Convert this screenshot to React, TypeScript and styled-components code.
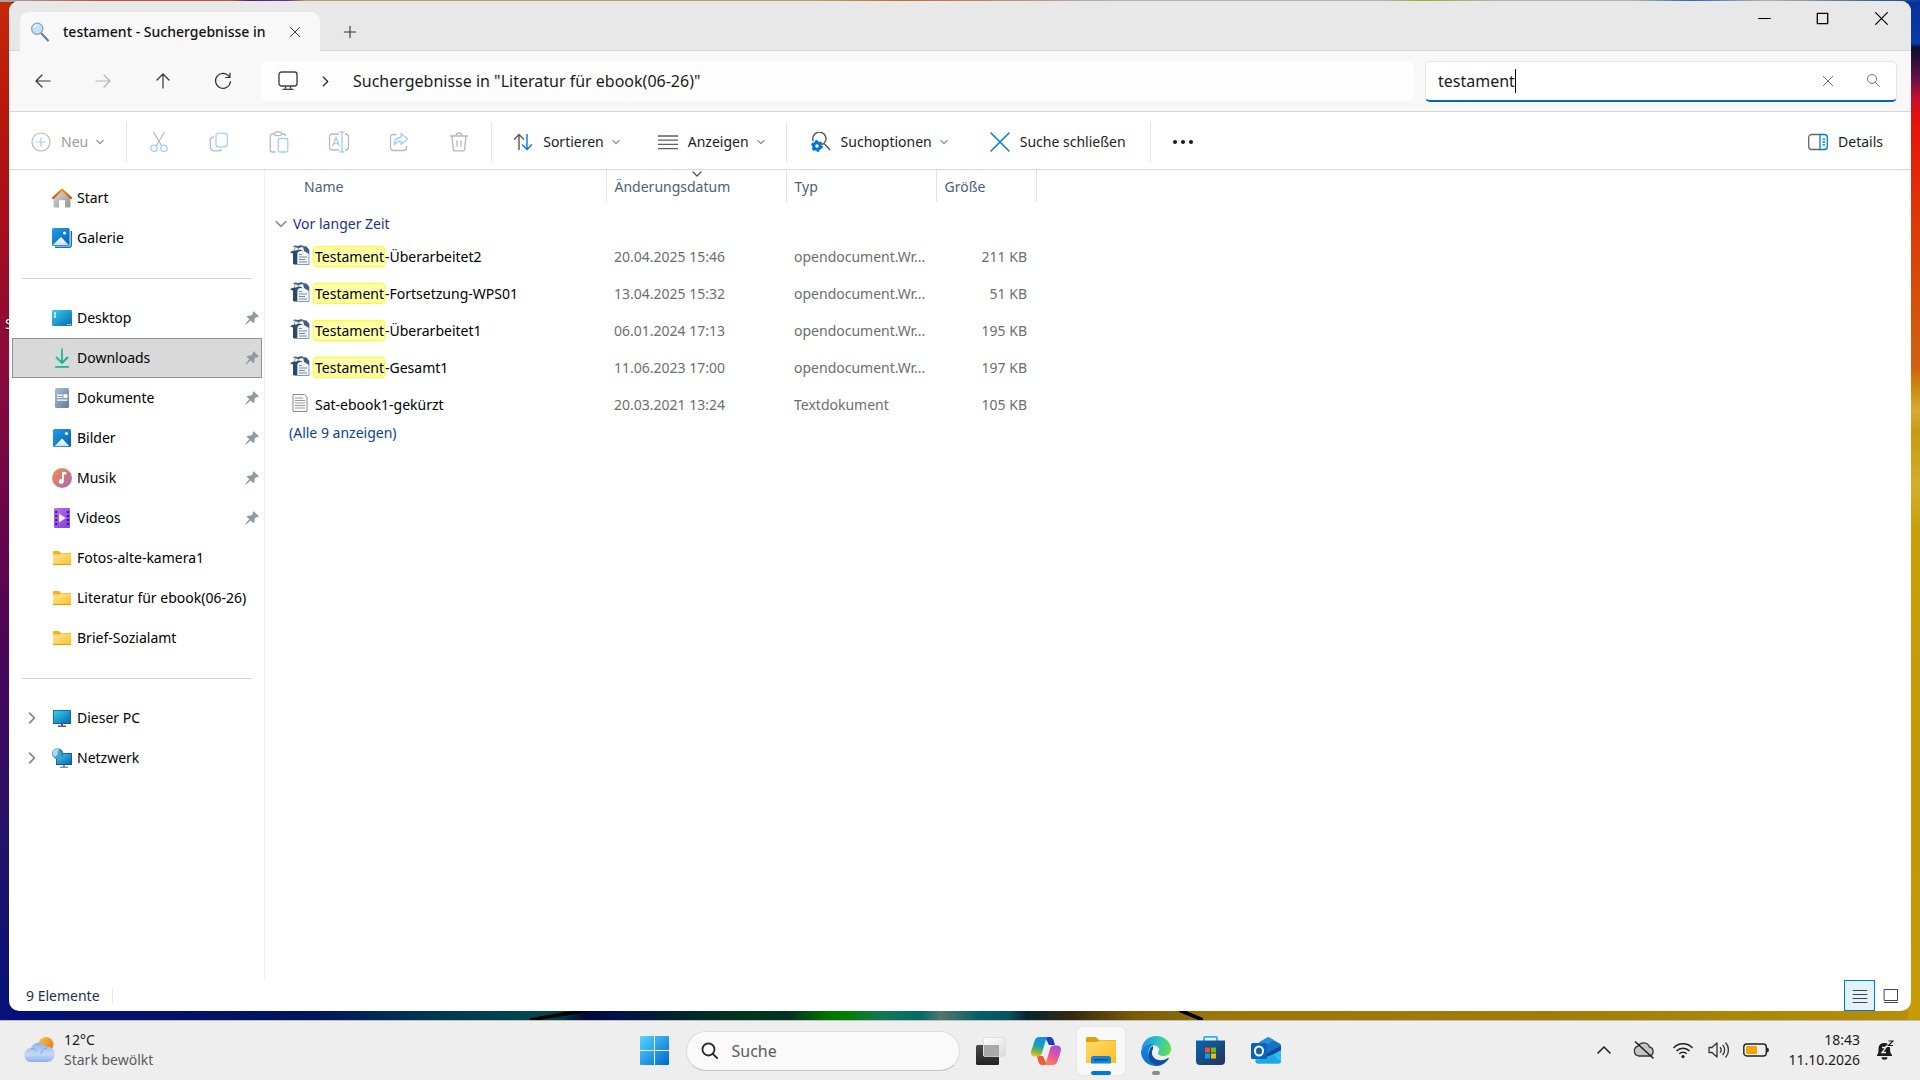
import React from "react";
import styled, { createGlobalStyle, css } from "styled-components";

const GlobalStyle = createGlobalStyle`
  *, *::before, *::after { box-sizing: border-box; }
  html, body { margin: 0; height: 100%; overflow: hidden; }
  body {
    font-family: "Noto Sans", "Open Sans", sans-serif;
    font-size: 14px;
    line-height: 20px;
    color: #1b1b1b;
  }
  button, input {
    font: inherit;
    color: inherit;
    margin: 0;
    padding: 0;
    border: 0;
    background: none;
    outline: none;
  }
  svg { display: block; flex: none; }
`;

/* ---------- desktop and window frame ---------- */

const Desktop = styled.div`
  position: relative;
  display: flex;
  flex-direction: column;
  height: 100vh;
  background:
    linear-gradient(90deg, #a8a8a8 0, #b4593c 5%, #b4593c 12%, #4b1f80 13%, #6a3290 15%, #b8a468 16%, #b8a468 42%, #c06a3a 47%, #b4b4b4 58%, #b4b4b4 72%, #9cae30 74%, #b4b4b4 78%, #b4b4b4 85%, #2a6cb0 88%, #b4b4b4 92%, #4a7090 97%, #0a3aa0 100%) 0 0 / 100% 2px no-repeat,
    linear-gradient(180deg, #c32a08 0, #b8180c 10%, #a60e1a 20%, #8f0a38 32%, #6c0548 47%, #45065a 62%, #221268 78%, #0c1276 90%, #00107a 100%) 0 0 / 12px 100% no-repeat,
    linear-gradient(180deg, #08309a 0, #0a3aa8 4%, #0a1030 4.4%, #5a1040 7%, #c01030 9%, #e81008 11%, #e03008 18%, #d84a08 26%, #cf6210 34%, #cc8a10 36%, #d8aa38 38%, #c89a10 40%, #d2ae30 45%, #c8a008 49%, #c09808 75%, #c89a08 100%) 100% 0 / 12px 100% no-repeat,
    linear-gradient(to top right, transparent 38%, #000 42%, #000 58%, transparent 62%) 62.2% calc(100% - 60px) / 24px 10px no-repeat,
    linear-gradient(to bottom right, transparent 38%, #000 42%, #000 56%, transparent 60%) 28.5% calc(100% - 60px) / 60px 10px no-repeat,
    linear-gradient(90deg, #00107a 0, #00145c 16%, #003a50 23%, #00494e 28.5%, #003848 29.2%, #00083a 30.5%, #00104a 32%, #02232f 35%, #013818 39%, #023024 41%, #007000 43%, #008000 44%, #107858 46%, #006c68 48%, #56746a 49%, #006068 51%, #065460 52.5%, #08242f 53.5%, #3a2a10 56%, #7a5a08 59%, #8a6a08 61.9%, #9a7608 62.7%, #a07c08 80%, #b88f08 100%) 0 100% / 100% 80px no-repeat,
    #101848;
`;

const ShortcutLabel = styled.span`
  position: absolute;
  left: 5px;
  top: 314px;
  color: #fff;
  text-shadow: 0 1px 2px #000;
`;

const Window = styled.main`
  position: relative;
  flex: 1;
  min-height: 0;
  display: flex;
  flex-direction: column;
  margin: 1px 9px 9px;
  overflow: hidden;
  border-radius: 10px;
  background: #fff;
`;

const TitleBar = styled.header`
  display: flex;
  align-items: flex-end;
  height: 50px;
  padding-left: 11px;
  background: #e8e8e8;
  border-bottom: 1px solid #d6d6d6;
`;

const Tab = styled.div`
  display: flex;
  align-items: center;
  height: 39px;
  width: 300px;
  margin-bottom: -1px;
  padding: 0 10px;
  background: #f8f8f8;
  border-radius: 9px 9px 0 0;
`;

const TabTitle = styled.span`
  flex: 1;
  margin: 0 10px 0 13px;
  overflow: hidden;
  white-space: nowrap;
  font-weight: 500;
  color: #111;
`;

const IconButton = styled.button<{ $w?: number; $h?: number; $dim?: boolean }>`
  display: inline-flex;
  align-items: center;
  justify-content: center;
  flex: none;
  width: ${(p) => p.$w ?? 60}px;
  height: ${(p) => p.$h ?? 40}px;
  color: ${(p) => (p.$dim ? "#b4b4b4" : "#333")};
`;

const CaptionButtons = styled.div`
  display: flex;
  align-self: flex-start;
  margin-left: auto;
`;

/* ---------- navigation bar ---------- */

const NavBar = styled.nav`
  display: flex;
  align-items: center;
  height: 61px;
  padding: 0 14px 0 4px;
  background: #f8f8f8;
  border-bottom: 1px solid #d6d6d6;
`;

const AddressBar = styled.div`
  flex: 1;
  display: flex;
  align-items: center;
  height: 40px;
  margin: 0 11px 0 8px;
  padding-left: 17px;
  border-radius: 5px;
  background: #fdfdfd;
  font-size: 16px;
`;

const Crumb = styled.a`
  color: #1b1b1b;
  text-decoration: none;
`;

const SearchField = styled.label`
  display: flex;
  align-items: center;
  width: 472px;
  height: 41px;
  padding-left: 12px;
  border: 1px solid #e4e4e4;
  border-bottom: 2px solid #0067c0;
  border-radius: 5px;
  background: #fff;
  font-size: 16px;
`;

const SearchInput = styled.input`
  field-sizing: content;
  caret-color: transparent;
`;

const Caret = styled.span`
  width: 1px;
  height: 24px;
  margin-right: auto;
  background: #000;
`;

/* ---------- command bar ---------- */

const CommandBar = styled.div`
  display: flex;
  align-items: center;
  height: 58px;
  padding: 2px 18px 0 2px;
  background: #fff;
  border-bottom: 1px solid #d6d6d6;
`;

const Command = styled.button<{ $dim?: boolean; $pad?: number }>`
  display: inline-flex;
  align-items: center;
  gap: 10px;
  height: 40px;
  padding: 0 ${(p) => p.$pad ?? 19}px;
  color: ${(p) => (p.$dim ? "#9c9c9c" : "#1b1b1b")};
  white-space: nowrap;

  & > svg:last-child { margin-left: -2px; }
`;

const Divider = styled.span<{ $h?: number }>`
  flex: none;
  width: 1px;
  height: ${(p) => p.$h ?? 40}px;
  margin: 0 2px;
  background: #e6e6e6;
`;

const Spacer = styled.span`
  flex: 1;
`;

/* ---------- body ---------- */

const Body = styled.div`
  flex: 1;
  min-height: 0;
  display: flex;
`;

const Sidebar = styled.aside`
  width: 256px;
  padding: 8px 2px 0 3px;
  border-right: 1px solid #f0f0f0;
`;

const TreeRow = styled.a<{ $selected?: boolean }>`
  display: flex;
  align-items: center;
  height: 40px;
  padding-right: 2px;
  border: 1px solid transparent;
  color: #000;
  text-decoration: none;
  white-space: nowrap;
  ${(p) =>
    p.$selected &&
    css`
      background: #d9d9d9;
      border-color: #929292;
    `}
`;

const Expander = styled.span`
  display: flex;
  justify-content: center;
  width: 37px;
`;

const TreeIcon = styled.span`
  display: flex;
  justify-content: center;
  width: 24px;
  margin-right: 3px;
`;

const TreeRule = styled.hr`
  height: 1px;
  margin: 20px 10px 19px;
  border: 0;
  background: #d4d4d4;
`;

const Content = styled.section`
  flex: 1;
  min-width: 0;
`;

const FileTable = styled.table`
  width: 771px;
  table-layout: fixed;
  border-collapse: collapse;
  color: #6d6d6d;
  white-space: nowrap;
`;

const HeadCell = styled.th<{ $w: number; $first?: boolean }>`
  position: relative;
  width: ${(p) => p.$w}px;
  height: 32px;
  padding: 2px 0 0 ${(p) => (p.$first ? 39 : 8)}px;
  border-right: 1px solid #e4e4e4;
  color: #4c607a;
  font-weight: 400;
  text-align: left;
`;

const SortMark = styled.span`
  position: absolute;
  left: 50%;
  top: -1px;
  margin-left: -4px;
`;

const GroupCell = styled.td`
  height: 36px;
  padding: 7px 0 0 10px;
`;

const GroupToggle = styled.button`
  display: flex;
  align-items: center;
  gap: 6px;
  color: #1e3287;
`;

const NameCell = styled.td`
  height: 37px;
  padding: 0 0 0 25px;
  color: #000;
`;

const NameInner = styled.div`
  display: flex;
  align-items: center;
  gap: 3px;

  & > svg { margin-bottom: 3px; }
`;

const FileName = styled.span`
  padding-left: 2px;
`;

const Hit = styled.mark`
  margin-left: -2px;
  padding: 0 0 0 1px;
  border: 1px solid #ffff1a;
  border-radius: 3px;
  background: #ffffa8;
  color: #000;
`;

const Cell = styled.td<{ $right?: boolean }>`
  padding: 0 ${(p) => (p.$right ? 9 : 20)}px 0 8px;
  overflow: hidden;
  text-overflow: ellipsis;
  text-align: ${(p) => (p.$right ? "right" : "left")};
`;

const TypeCell = styled(Cell)`
  padding-right: 4px;
`;

const ShowAll = styled.a`
  display: inline-block;
  margin-left: 24px;
  color: #0a3f94;
  text-decoration: none;
`;

const StatusBar = styled.footer`
  display: flex;
  align-items: center;
  gap: 10px;
  height: 31px;
  padding-left: 17px;
  color: #1b2f55;
`;

const ViewButton = styled.button<{ $on?: boolean }>`
  display: flex;
  align-items: center;
  justify-content: center;
  width: 31px;
  height: 31px;
  ${(p) =>
    p.$on &&
    css`
      border: 1px solid #0078d7;
      background: #e3f2fb;
    `}
`;

const ViewButtons = styled.div`
  display: flex;
  margin-left: auto;
  padding-right: 5px;
`;

/* ---------- taskbar ---------- */

const Taskbar = styled.footer`
  display: grid;
  grid-template-columns: 1fr auto 1fr;
  align-items: center;
  height: 60px;
  border-top: 1px solid #bdbdbd;
  background: #eeeeee;
`;

const Weather = styled.button`
  display: flex;
  align-items: center;
  gap: 9px;
  padding: 0 0 2px 24px;
  text-align: left;
`;

const TwoLine = styled.span<{ $end?: boolean }>`
  display: flex;
  flex-direction: column;
  align-items: ${(p) => (p.$end ? "flex-end" : "flex-start")};
`;

const Muted = styled.span`
  color: #5c5c5c;
`;

const TaskCenter = styled.div`
  display: flex;
  align-items: center;
  gap: 7px;
`;

const TaskButton = styled.button<{ $active?: boolean }>`
  position: relative;
  display: flex;
  align-items: center;
  justify-content: center;
  width: 48px;
  height: 48px;
  border-radius: 5px;
  ${(p) =>
    p.$active &&
    css`
      background: #f8f8f8;
      box-shadow: 0 0 0 1px #e6e6e6;
    `}
`;

const RunMark = styled.span<{ $active?: boolean }>`
  position: absolute;
  left: 50%;
  bottom: 0;
  width: ${(p) => (p.$active ? 20 : 8)}px;
  height: 4px;
  transform: translateX(-50%);
  border-radius: 2px;
  background: ${(p) => (p.$active ? "#0078d4" : "#8a8a8a")};
`;

const TaskSearch = styled.label`
  display: flex;
  align-items: center;
  gap: 13px;
  width: 274px;
  height: 40px;
  padding-left: 14px;
  border: 1px solid #dcdcdc;
  border-bottom-color: #c4c4c4;
  border-radius: 20px;
  background: #fafafa;
  font-size: 16px;
`;

const TaskInput = styled.input`
  flex: 1;
  min-width: 0;
  &::placeholder { color: #5c5c5c; opacity: 1; }
`;

const Tray = styled.div`
  display: flex;
  align-items: center;
  justify-content: flex-end;
  padding: 0 26px 2px 0;
`;

const TrayButton = styled.button<{ $w: number }>`
  display: flex;
  justify-content: center;
  width: ${(p) => p.$w}px;
`;

const Clock = styled.button`
  margin: 0 16px 0 12px;
`;

/* ---------- icons ---------- */

type Stroke = { d: string; s?: number; c?: string; w?: number; box?: number };
const Line = ({ d, s = 20, c = "currentColor", w = 1.2, box = 20 }: Stroke) => (
  <svg width={s} height={s} viewBox={`0 0 ${box} ${box}`} fill="none" stroke={c} strokeWidth={w} strokeLinecap="round" strokeLinejoin="round">
    <path d={d} />
  </svg>
);

const ChevronDown = ({ s = 8, c = "#808080" }: { s?: number; c?: string }) => (
  <Line d="M1 3l4 4 4-4" s={s} box={10} c={c} w={1.3} />
);

const LensIcon = () => (
  <svg width="20" height="20" viewBox="0 0 20 20">
    <path d="M11.5 11.5l6.5 7" stroke="#5b7f9a" strokeWidth="2" strokeLinecap="round" />
    <circle cx="7.2" cy="6.8" r="5.6" fill="#bfe3fb" stroke="#8fa3b1" strokeWidth="1.3" />
    <path d="M4 6a3.4 3.4 0 0 1 3-3" stroke="#fff" strokeWidth="1.2" fill="none" />
  </svg>
);

const MonitorIcon = () => (
  <svg width="20" height="20" viewBox="0 0 20 20" fill="none" stroke="#444" strokeWidth="1.4">
    <rect x="1" y="1" width="18" height="14" rx="2.4" />
    <path d="M7.5 15v3M12.5 15v3M4.5 18.4h11" />
  </svg>
);

const GREY = "#b9b9b9";
const SKY = "#9fd0f5";

const PlusCircle = () => (
  <svg width="20" height="20" viewBox="0 0 20 20" fill="none" strokeWidth="1.2">
    <circle cx="10" cy="10" r="9" stroke={GREY} />
    <path d="M10 5.5v9M5.5 10h9" stroke={SKY} />
  </svg>
);
const CutIcon = () => (
  <svg width="20" height="22" viewBox="0 0 20 22" fill="none" strokeWidth="1.3">
    <path d="M4.5 1l8.3 14M15.5 1L7.2 15" stroke={GREY} />
    <circle cx="5" cy="17.3" r="3.2" stroke={SKY} />
    <circle cx="15" cy="17.3" r="3.2" stroke={SKY} />
  </svg>
);
const CopyIcon = () => (
  <svg width="20" height="20" viewBox="0 0 20 20" fill="none" strokeWidth="1.3">
    <path d="M5 5.2H4A2.6 2.6 0 0 0 1.4 7.8v7.6A3.4 3.4 0 0 0 4.8 18.8h5.2a2.4 2.4 0 0 0 2.4-2" stroke={GREY} />
    <rect x="7" y="1.2" width="11.4" height="13.6" rx="2.4" stroke={SKY} />
  </svg>
);
const PasteIcon = () => (
  <svg width="20" height="22" viewBox="0 0 20 22" fill="none" strokeWidth="1.3">
    <path d="M6 3H3.3A2 2 0 0 0 1.3 5v14a2 2 0 0 0 2 2H6.5M12 3h2.5a2 2 0 0 1 2 2" stroke={GREY} />
    <rect x="5.5" y="1" width="7" height="3.6" rx="1.5" stroke={GREY} />
    <rect x="9.2" y="7.5" width="9.6" height="13.5" rx="1.8" stroke={SKY} />
  </svg>
);
const RenameIcon = () => (
  <svg width="22" height="22" viewBox="0 0 22 22" fill="none" strokeWidth="1.3">
    <path d="M11 3H4.5A3 3 0 0 0 1.5 6v10a3 3 0 0 0 3 3H11M17 3h.5a3 3 0 0 1 3 3v10a3 3 0 0 1-3 3H17" stroke={GREY} />
    <path d="M14 1v20M11.5 1h5M11.5 21h5M4.5 15.5L8 6.5l3.5 9M5.7 12.5h4.6" stroke={SKY} />
  </svg>
);
const ShareIcon = () => (
  <svg width="20" height="20" viewBox="0 0 20 20" fill="none" strokeWidth="1.3" strokeLinejoin="round">
    <path d="M7.5 2.5H4.2A2.7 2.7 0 0 0 1.5 5.2v10.6a2.7 2.7 0 0 0 2.7 2.7h10.6a2.7 2.7 0 0 0 2.7-2.7V14" stroke={GREY} />
    <path d="M12.2 1.5l6.3 5.5-6.3 5.5V9.3c-3.2 0-5.5 1-7.2 3.7.3-4.7 3-7.5 7.2-8z" stroke={SKY} />
  </svg>
);
const TrashIcon = () => (
  <svg width="20" height="20" viewBox="0 0 20 20" fill="none" stroke={GREY} strokeWidth="1.4">
    <path d="M1 4h18M7 4a3 3 0 0 1 6 0M3 4l1.3 13A2 2 0 0 0 6.3 18.9h7.4a2 2 0 0 0 2-1.9L17 4M8 8.5v6M12 8.5v6" />
  </svg>
);
const SortIcon = () => (
  <svg width="20" height="18" viewBox="0 0 20 18" fill="none" strokeWidth="1.4">
    <path d="M6 17V1.5M1 6.5l5-5 5 5" stroke="#555" />
    <path d="M14 1v15.5M9 11.5l5 5 5-5" stroke="#0078d4" />
  </svg>
);
const ListIcon = () => <Line d="M0 4h20M0 8.2h20M0 12.4h20M0 16.6h20" c="#5f5f5f" w={1.3} />;

const SearchOptionsIcon = () => (
  <svg width="20" height="20" viewBox="0 0 20 20" fill="none">
    <path d="M2.2 9A6.6 6.6 0 1 1 11 12.7M13.5 12l5.7 6" stroke="#555" strokeWidth="1.4" />
    <circle cx="6" cy="14" r="3.3" stroke="#0078d4" strokeWidth="3" />
    <circle cx="6" cy="14" r="4.9" stroke="#0078d4" strokeWidth="2" strokeDasharray="2.6 2.53" />
  </svg>
);
const DetailsIcon = () => (
  <svg width="20" height="18" viewBox="0 0 20 18" fill="none" strokeWidth="1.3">
    <path d="M12 1.5H3.7a3 3 0 0 0-3 3v9a3 3 0 0 0 3 3H12" stroke="#666" />
    <path d="M12 1.5h4.3a3 3 0 0 1 3 3v9a3 3 0 0 1-3 3H12zM14.5 6.2h2.7M14.5 9h2.7M14.5 11.8h2.7" stroke="#0078d4" />
  </svg>
);

const HiddenDefs = styled.svg`
  position: absolute;
`;

const Defs = () => (
  <HiddenDefs width="0" height="0" aria-hidden="true">
    <defs>
      <linearGradient id="blue" x1="0" y1="0" x2="1" y2="1"><stop offset="0" stopColor="#1f9fe8" /><stop offset="1" stopColor="#0560b5" /></linearGradient>
      <linearGradient id="cyan" x1="0" y1="0" x2="1" y2="1"><stop offset="0" stopColor="#35d3ea" /><stop offset="1" stopColor="#0a62b5" /></linearGradient>
      <linearGradient id="roof" x1="0" y1="0" x2="0" y2="1"><stop offset="0" stopColor="#f29a0c" /><stop offset="1" stopColor="#d1440c" /></linearGradient>
      <linearGradient id="wall" x1="0" y1="0" x2="1" y2="1"><stop offset="0" stopColor="#dcdcdc" /><stop offset="1" stopColor="#949494" /></linearGradient>
      <linearGradient id="down" x1="0" y1="0" x2="1" y2="1"><stop offset="0" stopColor="#2fd07c" /><stop offset="1" stopColor="#0b9fae" /></linearGradient>
      <linearGradient id="doc" x1="0" y1="0" x2="1" y2="1"><stop offset="0" stopColor="#a7bdd3" /><stop offset="1" stopColor="#637f9c" /></linearGradient>
      <linearGradient id="music" x1="0" y1="0" x2="1" y2="1"><stop offset="0" stopColor="#f5914e" /><stop offset="1" stopColor="#a864b0" /></linearGradient>
      <linearGradient id="video" x1="0" y1="0" x2="1" y2="1"><stop offset="0" stopColor="#b86cf0" /><stop offset="1" stopColor="#8040e0" /></linearGradient>
      <linearGradient id="folder" x1="0" y1="0" x2="1" y2="1"><stop offset="0" stopColor="#ffe694" /><stop offset="1" stopColor="#fbc22e" /></linearGradient>
      <linearGradient id="snow" x1="0" y1="0" x2="0" y2="1"><stop offset="0" stopColor="#fff" /><stop offset="1" stopColor="#c9e2f7" /></linearGradient>
    </defs>
  </HiddenDefs>
);

const HomeIcon = () => (
  <svg width="20" height="20" viewBox="0 0 20 20">
    <path d="M1.5 9.5L10 1.5l8.5 8V18a1.5 1.5 0 0 1-1.5 1.5h-4v-7.3H7v7.3H3A1.5 1.5 0 0 1 1.5 18z" fill="url(#wall)" />
    <path d="M1 10l9-8.5L19 10" fill="none" stroke="url(#roof)" strokeWidth="2" strokeLinecap="round" strokeLinejoin="round" />
  </svg>
);
const GalleryIcon = () => (
  <svg width="20" height="20" viewBox="0 0 20 20">
    <path d="M3 19.3h14a2.3 2.3 0 0 0 2.3-2.3V3" fill="none" stroke="#1170bd" strokeWidth="1.4" />
    <rect width="17.6" height="18" rx="1.5" fill="url(#blue)" />
    <path d="M0.5 17.3L9 9l8 8.3z" fill="url(#snow)" /><circle cx="12.5" cy="5" r="1.6" fill="#fff" />
  </svg>
);
const DesktopIcon = () => (
  <svg width="20" height="16" viewBox="0 0 20 16">
    <rect width="20" height="16" rx="1.2" fill="url(#cyan)" />
    <path d="M2 2.5h2v2H2zM2 5.5h2v2H2zM15 14h1.5v1H15zM17.5 14H19v1h-1.5z" fill="#fff" />
  </svg>
);
const DownloadIcon = () => (
  <svg width="20" height="20" viewBox="0 0 20 20" fill="none" stroke="url(#down)" strokeWidth="1.8">
    <path d="M10.01 0.5L10 14.5M4 9l6 6 6-6" />
    <path d="M3 18h14v1.8H3z" fill="#1bb894" stroke="none" />
  </svg>
);
const DocumentIcon = () => (
  <svg width="20" height="20" viewBox="0 0 20 20">
    <rect x="3" width="14" height="20" rx="1.5" fill="url(#doc)" />
    <path d="M5 6.5h5.5v1.4H5zM5 9h5.5v1H5zM11.5 6.3h4v3.7h-4zM5 11.5h10.5v1.2H5z" fill="#fff" />
  </svg>
);
const PictureIcon = () => (
  <svg width="18" height="18" viewBox="0 0 18 18">
    <rect width="18" height="18" rx="1.5" fill="url(#blue)" />
    <path d="M1.5 17.3L9 9.5l7.5 7.8z" fill="url(#snow)" /><circle cx="13.5" cy="4.5" r="1.6" fill="#fff" />
  </svg>
);
const MusicIcon = () => (
  <svg width="20" height="20" viewBox="0 0 20 20">
    <circle cx="10" cy="10" r="10" fill="url(#music)" />
    <path d="M10 4h4.2v2.6h-2.4v7a2.5 2.4 0 1 1-1.8-2.5z" fill="#fff" />
  </svg>
);
const VideoIcon = () => (
  <svg width="16" height="20" viewBox="0 0 16 20">
    <rect width="16" height="20" rx="1.2" fill="url(#video)" />
    <path d="M2.2 3v15M13.9 3v15" stroke="#3a1768" strokeWidth="2" strokeDasharray="2 2" />
    <path d="M5 5.5l6.8 4.5L5 14.5z" fill="#f2f2f2" />
  </svg>
);
const FolderIcon = () => (
  <svg width="18" height="14" viewBox="0 0 18 14">
    <path d="M0 1a1 1 0 0 1 1-1h5l2 2h9a1 1 0 0 1 1 1v10H0z" fill="#f3b11c" />
    <path d="M0 3.6h6.5l1.5-1h10V13H0z" fill="url(#folder)" />
    <path d="M0 13h18v1H0z" fill="#e39f14" />
  </svg>
);
const PcIcon = () => (
  <svg width="18" height="17" viewBox="0 0 18 17">
    <path d="M0 .8A.8.8 0 0 1 .8 0h16.4a.8.8 0 0 1 .8.8V14H0z" fill="#0a5f8f" /><path d="M.8.8h16.4v12.4H.8z" fill="url(#cyan)" />
    <path d="M8 14h2v1.5H8zM5 15.5h8V17H5z" fill="#51606b" />
  </svg>
);
const NetworkIcon = () => (
  <svg width="20" height="20" viewBox="0 0 20 20">
    <path d="M4 5h16v12H4z" fill="#0c588c" /><path d="M4.8 5.8h14.4v10.4H4.8z" fill="url(#cyan)" />
    <path d="M11 17h2v1.8h-2zM8 18.7h8V20H8z" fill="#7e8a92" />
    <circle cx="5.5" cy="5.5" r="5.5" fill="#4d9fc9" /><path d="M1 3c2-2 4-3 6-2.5C6 3 5 4 6 6c-1 2-2 1-3 3C1 8 0 5 1 3z" fill="#a9d9ee" />
    <path d="M8 2a5 5 0 0 1 2 6" stroke="#2b6f9b" strokeWidth="1.2" fill="none" />
  </svg>
);
const PinIcon = () => (
  <svg width="14" height="14" viewBox="0 0 14 14" fill="#8f9aa2">
    <path d="M8.8.3L13.7 5.2c-.8 1.3-1.7 1.3-2.7 1L9.4 8c.5 1.8.1 3-1 4.2L5.6 9.5 1 13.6l-.7-.7 4-4.7L1.5 5.5c1.2-1 2.6-1.2 4-.8L7.7 3C7.5 1.9 7.8 1 8.8.3z" />
  </svg>
);
const WriterIcon = () => (
  <svg width="20" height="20" viewBox="0 0 20 20">
    <path d="M5 2h11l3 3v14.5H4V9z" fill="#f4f7fa" stroke="#8a9db0" strokeWidth="1" />
    <path d="M3 8h4.3v11H3z" fill="#274a6b" />
    <path d="M9 9.5h3M9 12h8M9 14.5h6M9 17h8" stroke="#6c8cab" strokeWidth="1.1" />
    <path d="M0 7.5C2 5.5 4 5 6 5.8 8 3.8 11 4 13 6.5 10 5.5 8.5 6 7.3 8.5H3z" fill="#314d69" />
    <path d="M2.5 1.5C4.5 0 6.5.3 8 1.3c2-1.6 5-1.3 7 .9-2.6-.8-4.8-.3-6.5 1.5C6.7 2 4.7 1.3 2.5 1.5z" fill="#3c5a78" />
    <path d="M13 1.5h3.5L19 4.5V9L14 6z" fill="#415f7c" />
  </svg>
);
const TextFileIcon = () => (
  <svg width="20" height="20" viewBox="0 0 20 20" fill="none" stroke="#8c8c8c">
    <path d="M3 1.5h11.5l2.5 2.5v14.5H3z" fill="#fafafa" />
    <path d="M5 5h8M5 7.5h10M5 10h10M5 12.5h10M5 15h10" stroke="#9a9a9a" />
  </svg>
);

const CloudSunIcon = () => (
  <svg width="31" height="31" viewBox="0 0 31 31">
    <defs>
      <linearGradient id="sun" x1="0" y1="0" x2="1" y2="1"><stop offset="0.2" stopColor="#edb83a" /><stop offset="0.9" stopColor="#f47216" /></linearGradient>
      <linearGradient id="cloud" x1="0" y1="0" x2="0" y2="1"><stop offset="0" stopColor="#8fb2ee" /><stop offset="0.6" stopColor="#c5d9f8" /><stop offset="1" stopColor="#8db0ea" /></linearGradient>
    </defs>
    <circle cx="22" cy="10.5" r="7.5" fill="url(#sun)" />
    <path d="M7.5 28a7 7 0 0 1-.5-14 8.5 8.5 0 0 1 15-1.5 7.8 7.8 0 0 1 2 15.5z" fill="url(#cloud)" />
    <path d="M7 14.5a7 7 0 0 1 6 2.5M17 20a7 7 0 0 1 6-6" stroke="#7ea4e4" fill="none" strokeWidth="1" />
  </svg>
);
const StartIcon = () => (
  <svg width="29" height="29" viewBox="0 0 29 29">
    <defs><linearGradient id="win" gradientUnits="userSpaceOnUse" x1="0" y1="0" x2="29" y2="29"><stop offset="0" stopColor="#54d6ff" /><stop offset="1" stopColor="#0067cf" /></linearGradient></defs>
    <path d="M1 0h13v14H0V1a1 1 0 0 1 1-1zM15 0h13a1 1 0 0 1 1 1v13H15zM0 15h14v14H1a1 1 0 0 1-1-1zM15 15h14v13a1 1 0 0 1-1 1H15z" fill="url(#win)" />
  </svg>
);
const TaskViewIcon = () => (
  <svg width="30" height="28" viewBox="0 0 30 28">
    <defs>
      <linearGradient id="tv" x1="0" y1="0" x2="0" y2="1"><stop offset="0" stopColor="#4a4a4a" /><stop offset="1" stopColor="#222" /></linearGradient>
      <linearGradient id="tg" x1="0" y1="0" x2="1" y2="1"><stop offset="0" stopColor="#fff" /><stop offset="1" stopColor="#dadada" /></linearGradient>
    </defs>
    <rect y="8" width="23" height="20" rx="1.5" fill="url(#tv)" />
    <rect x="7.5" y="0.5" width="22" height="19" rx="1.5" fill="url(#tg)" stroke="#dedede" />
    <path d="M8 8h15v11.5H8z" fill="#a9a9a9" />
  </svg>
);
const CopilotIcon = () => (
  <svg width="30" height="28" viewBox="0 0 30 28">
    <defs>
      <linearGradient id="cp1" x1="0.5" y1="0" x2="0.3" y2="1"><stop offset="0" stopColor="#0c8fe8" /><stop offset="0.45" stopColor="#1e9ec0" /><stop offset="0.7" stopColor="#64b450" /><stop offset="1" stopColor="#f2c020" /></linearGradient>
      <linearGradient id="cp2" x1="0.7" y1="0" x2="0.3" y2="1"><stop offset="0" stopColor="#a150e0" /><stop offset="0.5" stopColor="#e8559c" /><stop offset="1" stopColor="#ff8050" /></linearGradient>
    </defs>
    <path d="M14 0h5c2 0 3 1.5 3.5 3l1.5 5h-6z" fill="#1a3fc4" />
    <path d="M16 28h-5c-2 0-3-1.5-3.5-3L6 19h6z" fill="#f05a34" />
    <path d="M8.5 0H18c-1.8 0-2.7 1.5-3.2 3L11 16c-.6 2-1.8 3.5-4 3.5H4c-3.5 0-4.5-3-3.7-6L3.5 4C4.3 1.5 6 0 8.5 0z" fill="url(#cp1)" />
    <path d="M21.5 28H12c1.8 0 2.7-1.5 3.2-3L19 12c.6-2 1.8-3.5 4-3.5h3c3.5 0 4.5 3 3.7 6L26.5 24c-.8 2.5-2.5 4-5 4z" fill="url(#cp2)" />
  </svg>
);
const ExplorerIcon = () => (
  <svg width="30" height="27" viewBox="0 0 30 27">
    <defs><linearGradient id="ex" x1="0" y1="0" x2="1" y2="1"><stop offset="0" stopColor="#ffdb68" /><stop offset="1" stopColor="#fbbd22" /></linearGradient></defs>
    <path d="M0 1.5A1.5 1.5 0 0 1 1.5 0h8.3l3 3H30v6H0z" fill="#dfa00c" />
    <path d="M0 5h10.5l3-1.5H30V26H0z" fill="url(#ex)" />
    <path d="M5 26.5V21.5a2.5 2.5 0 0 1 2.5-2.5h15a2.5 2.5 0 0 1 2.5 2.5v5z" fill="#1583d6" />
    <path d="M8.5 22.8h13" stroke="#064f96" strokeWidth="1.4" strokeLinecap="round" />
  </svg>
);
const EdgeIcon = () => (
  <svg width="30" height="30" viewBox="0 0 30 30">
    <defs>
      <linearGradient id="e1" x1="0" y1="0.3" x2="1" y2="0.5"><stop offset="0" stopColor="#1b94dc" /><stop offset="0.5" stopColor="#2cc0cc" /><stop offset="1" stopColor="#64e04a" /></linearGradient>
      <linearGradient id="e2" x1="0" y1="0" x2="0" y2="1"><stop offset="0" stopColor="#1589d8" /><stop offset="1" stopColor="#0b6fd0" /></linearGradient>
    </defs>
    <path d="M0.5 13.5C1.5 5 8 0 15 0c9 0 15 6.5 15 13 0 4.2-3 7-7 7-3.5 0-6-1.3-6-3 0-1 1.2-1.6 1.2-3.8C18.2 10.5 15.5 8 11 8 6 8 2 10.5.5 13.5z" fill="url(#e1)" />
    <path d="M11 9.5c-2.5 2-4 5-3.5 8.5.5 5.5 4.5 10 9.5 11.8-1 .2-1.5.2-2.5.2C6.5 29.7 0 23.5 0 15.5 1 10.5 5.5 8 10.5 8c4 0 7.2 2 7.7 5-1-2.5-4-4.5-7.2-3.5z" fill="url(#e2)" />
    <path d="M12 13c-1.2 2-1.5 4.5-.3 7C13.5 23.5 18 25 22 24c2-.4 3.6-1.2 5-2 .6-.3 1.2.2.8.8C25 27 21 29.5 16.5 29.9 10 27.8 7 22.5 7.5 17.5 8 14 9.5 11 12 9.7z" fill="#0d50a0" />
  </svg>
);
const StoreIcon = () => (
  <svg width="29" height="29" viewBox="0 0 29 29">
    <defs><linearGradient id="st" x1="0" y1="0" x2="1" y2="1"><stop offset="0" stopColor="#0a66b4" /><stop offset="1" stopColor="#243358" /></linearGradient></defs>
    <path d="M8 6V2a1.2 1.2 0 0 1 1.2-1.2h10.6A1.2 1.2 0 0 1 21 2v4" fill="none" stroke="#27b4ee" strokeWidth="1.8" />
    <path d="M0 4.5h29V25a4 4 0 0 1-4 4H4a4 4 0 0 1-4-4z" fill="url(#st)" />
    <path d="M9 11.5h5v5H9z" fill="#f25022" /><path d="M15 11.5h5v5h-5z" fill="#7fba00" />
    <path d="M9 17.5h5v5H9z" fill="#00a4ef" /><path d="M15 17.5h5v5h-5z" fill="#ffb900" />
  </svg>
);
const OutlookIcon = () => (
  <svg width="30" height="27" viewBox="0 0 30 27">
    <path d="M4 8L16.5.4a1.5 1.5 0 0 1 1.5 0L29 6.8a2 2 0 0 1 1 1.7L17 19 4 15z" fill="#1572c6" />
    <path d="M9 4.8L16.5.4a1.5 1.5 0 0 1 1.5 0l5 2.9-13 8z" fill="#1d93de" />
    <path d="M30 9.5V24a2.5 2.5 0 0 1-2.5 2.5H7A2.5 2.5 0 0 1 4.5 24v-2L15 17.5z" fill="#30bdf0" />
    <path d="M14 17.5L30 8.5V13L16 21z" fill="#1148a0" />
    <path d="M4.5 24L22 17.5l8 7a2.5 2.5 0 0 1-2.5 2H7A2.5 2.5 0 0 1 4.5 24z" fill="#1fa8e8" />
    <rect y="6" width="16" height="16" rx="1.5" fill="#0b64b8" />
    <ellipse cx="8" cy="14" rx="4" ry="4.6" fill="none" stroke="#fff" strokeWidth="2" />
  </svg>
);
const CloudOffIcon = () => (
  <svg width="22" height="20" viewBox="0 0 22 20" fill="none" stroke="#333" strokeWidth="1.3">
    <path d="M6 16A5 5 0 0 1 5 6.2 6.3 6.3 0 0 1 16.5 7 4.6 4.6 0 0 1 16.5 16z" fill="#c4c4c4" />
    <path d="M2 1.5L20.5 18.5" stroke="#1b1b1b" strokeWidth="1.5" />
  </svg>
);
const WifiIcon = () => (
  <svg width="22" height="18" viewBox="0 0 22 18" fill="none" stroke="#222" strokeWidth="1.5">
    <path d="M1.5 7a13 13 0 0 1 19 0M4.5 10a9 9 0 0 1 13 0M7.3 12.8a5.2 5.2 0 0 1 7.4 0" /><circle cx="11" cy="15.6" r="1.6" fill="#222" stroke="none" />
  </svg>
);
const SpeakerIcon = () => (
  <svg width="22" height="18" viewBox="0 0 22 18" fill="none" stroke="#333" strokeWidth="1.3" strokeLinejoin="round">
    <path d="M1 6.5h3L9 2v14l-5-4.5H1z" /><path d="M12 6.3a4 4 0 0 1 0 5.4M14.7 4a7.5 7.5 0 0 1 0 10M17.5 1.5a11 11 0 0 1 0 15" />
  </svg>
);
const BatteryIcon = () => (
  <svg width="26" height="14" viewBox="0 0 26 14">
    <rect x="0.8" y="1" width="22.5" height="12" rx="3" fill="none" stroke="#222" strokeWidth="1.4" />
    <path d="M24 4.5q2 .5 2 2.5t-2 2.5z" fill="#222" /><rect x="3" y="3" width="11" height="8" rx="1" fill="#f0a30a" />
  </svg>
);
const BellIcon = () => (
  <svg width="18" height="20" viewBox="0 0 18 20">
    <path d="M1 15c1.5-1.5 1.5-3 1.5-7A5.8 5.8 0 0 1 14 8c0 4 .5 5.5 2 7v1H1z" fill="#1b1b1b" />
    <path d="M5.5 17.3h6a3 2.5 0 0 1-6 0z" fill="#1b1b1b" />
    <path d="M6 7.5h4l-4 5h4" stroke="#eee" strokeWidth="1.3" fill="none" />
    <path d="M12.5 1h4.5l-4.5 4.5H17" stroke="#eee" strokeWidth="3" fill="none" /><path d="M12.5 1h4.5l-4.5 4.5H17" stroke="#1b1b1b" strokeWidth="1.2" fill="none" />
  </svg>
);

/* ---------- data ---------- */

type Node = { label: string; icon: React.ReactNode; pinned?: boolean; selected?: boolean; expandable?: boolean };

const groups: Node[][] = [
  [
    { label: "Start", icon: <HomeIcon /> },
    { label: "Galerie", icon: <GalleryIcon /> },
  ],
  [
    { label: "Desktop", icon: <DesktopIcon />, pinned: true },
    { label: "Downloads", icon: <DownloadIcon />, pinned: true, selected: true },
    { label: "Dokumente", icon: <DocumentIcon />, pinned: true },
    { label: "Bilder", icon: <PictureIcon />, pinned: true },
    { label: "Musik", icon: <MusicIcon />, pinned: true },
    { label: "Videos", icon: <VideoIcon />, pinned: true },
    { label: "Fotos-alte-kamera1", icon: <FolderIcon /> },
    { label: "Literatur für ebook(06-26)", icon: <FolderIcon /> },
    { label: "Brief-Sozialamt", icon: <FolderIcon /> },
  ],
  [
    { label: "Dieser PC", icon: <PcIcon />, expandable: true },
    { label: "Netzwerk", icon: <NetworkIcon />, expandable: true },
  ],
];

const files = [
  { hit: "Testament", rest: "-Überarbeitet2", date: "20.04.2025 15:46", type: "opendocument.Wr...", size: "211 KB" },
  { hit: "Testament", rest: "-Fortsetzung-WPS01", date: "13.04.2025 15:32", type: "opendocument.Wr...", size: "51 KB" },
  { hit: "Testament", rest: "-Überarbeitet1", date: "06.01.2024 17:13", type: "opendocument.Wr...", size: "195 KB" },
  { hit: "Testament", rest: "-Gesamt1", date: "11.06.2023 17:00", type: "opendocument.Wr...", size: "197 KB" },
  { hit: "", rest: "Sat-ebook1-gekürzt", date: "20.03.2021 13:24", type: "Textdokument", size: "105 KB" },
];

const CROSS = "M4 4l12 12M16 4L4 16";

export default function App() {
  return (
    <>
      <GlobalStyle />
      <Defs />
      <Desktop>
        <ShortcutLabel>S</ShortcutLabel>
        <Window>
          <TitleBar>
            <Tab>
              <LensIcon />
              <TabTitle>testament - Suchergebnisse in</TabTitle>
              <IconButton $w={30} $h={30} aria-label="Tab schließen"><Line d={CROSS} s={16} /></IconButton>
            </Tab>
            <IconButton $h={36} aria-label="Neuer Tab"><Line d="M10 2v16M2 10h16" s={14} w={1.6} /></IconButton>
            <CaptionButtons>
              <IconButton $w={58} $h={35} aria-label="Minimieren"><Line d="M1 10h18" s={13} c="#000" w={1.8} /></IconButton>
              <IconButton $w={58} $h={35} aria-label="Maximieren"><Line d="M2 2h16v16H2z" s={13} c="#000" w={2} /></IconButton>
              <IconButton $w={60} $h={35} aria-label="Schließen"><Line d="M1 1l18 18M19 1L1 19" s={13} c="#000" w={1.8} /></IconButton>
            </CaptionButtons>
          </TitleBar>

          <NavBar aria-label="Navigation">
            <IconButton aria-label="Zurück"><Line d="M17 10H3M9 4l-6 6 6 6" /></IconButton>
            <IconButton $dim aria-label="Vorwärts"><Line d="M3 10h14M11 4l6 6-6 6" /></IconButton>
            <IconButton aria-label="Nach oben"><Line d="M10 17V3M4 9l6-6 6 6" /></IconButton>
            <IconButton aria-label="Aktualisieren"><Line d="M16.5 6A7.5 7.5 0 1 0 17.5 10.5M17 2v4.500h-4.500" /></IconButton>
            <AddressBar>
              <MonitorIcon />
              <IconButton $w={55} aria-label="Pfad"><Line d="M3 1l4 4-4 4" s={11} box={10} c="#222" /></IconButton>
              <Crumb href="#suche">Suchergebnisse in "Literatur für ebook(06-26)"</Crumb>
            </AddressBar>
            <SearchField>
              <SearchInput defaultValue="testament" aria-label="Suchen" />
              <Caret />
              <IconButton $w={44} $h={38} aria-label="Suche löschen"><Line d={CROSS} s={16} c="#6a6a6a" /></IconButton>
              <IconButton $w={46} $h={38} aria-label="Suchen"><Line d="M12.5 12.5L18 18M8 14A6 6 0 1 0 8 2a6 6 0 0 0 0 12z" s={15} c="#6a6a6a" /></IconButton>
            </SearchField>
          </NavBar>

          <CommandBar>
            <Command $dim $pad={20}><PlusCircle />Neu<ChevronDown /></Command>
            <Divider />
            <IconButton aria-label="Ausschneiden"><CutIcon /></IconButton>
            <IconButton aria-label="Kopieren"><CopyIcon /></IconButton>
            <IconButton aria-label="Einfügen"><PasteIcon /></IconButton>
            <IconButton aria-label="Umbenennen"><RenameIcon /></IconButton>
            <IconButton aria-label="Teilen"><ShareIcon /></IconButton>
            <IconButton aria-label="Löschen"><TrashIcon /></IconButton>
            <Divider />
            <Command><SortIcon />Sortieren<ChevronDown /></Command>
            <Command><ListIcon />Anzeigen<ChevronDown /></Command>
            <Divider />
            <Command $pad={22}><SearchOptionsIcon />Suchoptionen<ChevronDown /></Command>
            <Command $pad={22}><Line d="M1 1l18 18M19 1L1 19" c="#0078d4" w={1.5} />Suche schließen</Command>
            <Divider />
            <IconButton aria-label="Mehr">
              <svg width="20" height="4" viewBox="0 0 20 4" fill="#1b1b1b"><circle cx="2" cy="2" r="2" /><circle cx="10" cy="2" r="2" /><circle cx="18" cy="2" r="2" /></svg>
            </IconButton>
            <Spacer />
            <Command $pad={10}><DetailsIcon /><span>Details</span></Command>
          </CommandBar>

          <Body>
            <Sidebar>
              {groups.map((group, g) => (
                <React.Fragment key={g}>
                  {g > 0 && <TreeRule />}
                  {group.map((n) => (
                    <TreeRow key={n.label} href="#ordner" $selected={n.selected}>
                      <Expander>{n.expandable && <Line d="M3 1l4 4-4 4" s={12} box={10} c="#808080" w={1.4} />}</Expander>
                      <TreeIcon>{n.icon}</TreeIcon>
                      {n.label}
                      {n.pinned && <><Spacer /><PinIcon /></>}
                    </TreeRow>
                  ))}
                </React.Fragment>
              ))}
            </Sidebar>

            <Content>
              <FileTable>
                <thead>
                  <tr>
                    <HeadCell $w={341} $first>Name</HeadCell>
                    <HeadCell $w={180}>Änderungsdatum<SortMark><ChevronDown s={10} c="#555" /></SortMark></HeadCell>
                    <HeadCell $w={150}>Typ</HeadCell>
                    <HeadCell $w={100}>Größe</HeadCell>
                  </tr>
                </thead>
                <tbody>
                  <tr>
                    <GroupCell colSpan={4}><GroupToggle><ChevronDown s={12} c="#909090" />Vor langer Zeit</GroupToggle></GroupCell>
                  </tr>
                  {files.map((f) => (
                    <tr key={f.rest}>
                      <NameCell>
                        <NameInner>
                          {f.hit ? <WriterIcon /> : <TextFileIcon />}
                          <FileName>{f.hit && <Hit>{f.hit}</Hit>}{f.rest}</FileName>
                        </NameInner>
                      </NameCell>
                      <Cell>{f.date}</Cell>
                      <TypeCell>{f.type}</TypeCell>
                      <Cell $right>{f.size}</Cell>
                    </tr>
                  ))}
                </tbody>
              </FileTable>
              <ShowAll href="#alle">(Alle 9 anzeigen)</ShowAll>
            </Content>
          </Body>

          <StatusBar>
            <span>9 Elemente</span>
            <Divider $h={16} />
            <ViewButtons>
              <ViewButton $on aria-label="Details"><Line d="M3 4.5h14M3 8.5h14M3 12.5h14M3 16.5h14" c="#444" w={1} /></ViewButton>
              <ViewButton aria-label="Große Symbole"><Line d="M3.5 3.5h13v11h-13zM3.5 16.5h13" c="#444" w={1} /></ViewButton>
            </ViewButtons>
          </StatusBar>
        </Window>

        <Taskbar>
          <Weather>
            <CloudSunIcon />
            <TwoLine><span>12°C</span><Muted>Stark bewölkt</Muted></TwoLine>
          </Weather>
          <TaskCenter>
            <TaskButton aria-label="Start"><StartIcon /></TaskButton>
            <TaskSearch>
              <Line d="M12.8 12.8L18 18M8.3 15A6.7 6.7 0 1 0 8.3 1.6a6.7 6.7 0 0 0 0 13.4z" s={18} c="#222" w={2} />
              <TaskInput placeholder="Suche" aria-label="Suche" />
            </TaskSearch>
            <TaskButton aria-label="Aktive Anwendungen"><TaskViewIcon /></TaskButton>
            <TaskButton aria-label="Copilot"><CopilotIcon /></TaskButton>
            <TaskButton $active aria-label="Explorer"><ExplorerIcon /><RunMark $active /></TaskButton>
            <TaskButton aria-label="Edge"><EdgeIcon /><RunMark /></TaskButton>
            <TaskButton aria-label="Store"><StoreIcon /></TaskButton>
            <TaskButton aria-label="Outlook"><OutlookIcon /></TaskButton>
          </TaskCenter>
          <Tray>
            <TrayButton $w={40} aria-label="Ausgeblendete Symbole"><Line d="M4 13l6-6 6 6" c="#222" w={1.6} /></TrayButton>
            <TrayButton $w={40} aria-label="OneDrive"><CloudOffIcon /></TrayButton>
            <TrayButton $w={38} aria-label="WLAN"><WifiIcon /></TrayButton>
            <TrayButton $w={34} aria-label="Lautstärke"><SpeakerIcon /></TrayButton>
            <TrayButton $w={40} aria-label="Akku"><BatteryIcon /></TrayButton>
            <Clock><TwoLine $end><span>18:43</span><span>11.10.2026</span></TwoLine></Clock>
            <BellIcon />
          </Tray>
        </Taskbar>
      </Desktop>
    </>
  );
}
